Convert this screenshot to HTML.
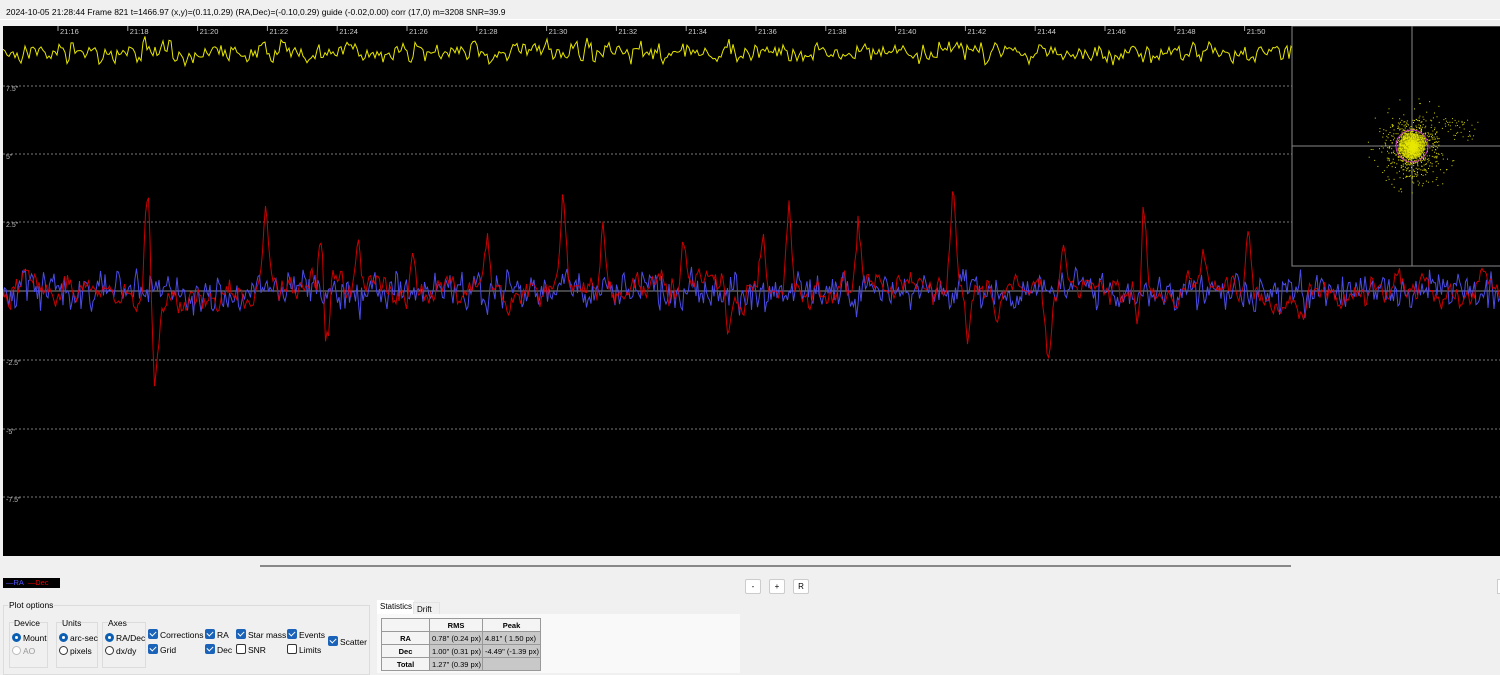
<!DOCTYPE html>
<html><head><meta charset="utf-8"><style>
*{box-sizing:border-box}
body{margin:0;width:1500px;height:673px;background:#f0f0f0;font-family:"Liberation Sans",sans-serif;font-size:8.5px;color:#000;position:relative;overflow:hidden}
.abs{position:absolute}
#top{left:0;top:0;width:1500px;height:20px;background:#f0f0f0;border-bottom:1px solid #fff}
#top span{position:absolute;left:6px;top:7px;font-size:8.5px}
#plot{left:3px;top:26px;width:1497px;height:530px;background:#000}
.grp{position:absolute;border:1px solid #dcdcdc;}
.lbl{position:absolute;font-size:8.5px;white-space:nowrap}
.rad{display:inline-block;width:9px;height:9px;border-radius:50%;border:1px solid #333;background:#fff;vertical-align:-1px;margin-right:2px}
.rad.on{border:3px solid #0a5fb4}
.cb{display:inline-block;width:10px;height:10px;background:#1a63b8;border-radius:2px;vertical-align:-1px;margin-right:2px;position:relative}
.cb:after{content:"";position:absolute;left:3px;top:1px;width:3px;height:5px;border:solid #fff;border-width:0 1px 1px 0;transform:rotate(45deg)}
.cb.off{background:#fff;border:1px solid #333}.cb.off:after{display:none}
.btn{position:absolute;top:579px;width:16px;height:15px;background:#fff;border:1px solid #ccc;border-radius:2px;font-size:8px;text-align:center;line-height:13px}
table{border-collapse:collapse;font-size:7.5px;white-space:nowrap;table-layout:fixed;width:159px}
td{border:1px solid #999;height:13px;padding:0 2px;line-height:11px;overflow:hidden}
</style></head><body>
<div id="top" class="abs"><span>2024-10-05 21:28:44 Frame 821 t=1466.97 (x,y)=(0.11,0.29) (RA,Dec)=(-0.10,0.29) guide (-0.02,0.00) corr (17,0) m=3208 SNR=39.9</span></div>
<svg id="plot" class="abs" width="1497" height="530" viewBox="0 0 1497 530"></svg>
<div class="abs" style="left:260px;top:565px;width:1031px;height:2px;background:#888"></div>
<div class="abs" style="left:3px;top:578px;width:57px;height:10px;background:#000;font-size:7.5px;line-height:10px;padding-left:3px;white-space:nowrap"><span style="color:#55f">—RA</span> &nbsp;<span style="color:#e00">—Dec</span></div>
<div class="btn" style="left:745px">-</div><div class="btn" style="left:769px">+</div><div class="btn" style="left:793px">R</div>
<div class="abs" style="left:1497px;top:579px;width:6px;height:15px;background:#fff;border:1px solid #ccc"></div>
<div class="grp" style="left:3px;top:605px;width:367px;height:70px"></div>
<div class="lbl" style="left:8px;top:600px;background:#f0f0f0;padding:0 1px">Plot options</div>
<div class="grp" style="left:9px;top:622px;width:39px;height:46px"></div><div class="lbl" style="left:14px;top:618px;background:#f0f0f0">Device</div>
<div class="lbl" style="left:12px;top:633px"><span class="rad on"></span>Mount</div>
<div class="lbl" style="left:12px;top:646px;color:#999"><span class="rad" style="border-color:#bbb"></span>AO</div>
<div class="grp" style="left:56px;top:622px;width:42px;height:46px"></div><div class="lbl" style="left:62px;top:618px;background:#f0f0f0">Units</div>
<div class="lbl" style="left:59px;top:633px"><span class="rad on"></span>arc-sec</div>
<div class="lbl" style="left:59px;top:646px"><span class="rad"></span>pixels</div>
<div class="grp" style="left:102px;top:622px;width:44px;height:46px"></div><div class="lbl" style="left:108px;top:618px;background:#f0f0f0">Axes</div>
<div class="lbl" style="left:105px;top:633px"><span class="rad on"></span>RA/Dec</div>
<div class="lbl" style="left:105px;top:646px"><span class="rad"></span>dx/dy</div>
<div class="lbl" style="left:148px;top:629px"><span class="cb"></span>Corrections</div>
<div class="lbl" style="left:148px;top:644px"><span class="cb"></span>Grid</div>
<div class="lbl" style="left:205px;top:629px"><span class="cb"></span>RA</div>
<div class="lbl" style="left:205px;top:644px"><span class="cb"></span>Dec</div>
<div class="lbl" style="left:236px;top:629px"><span class="cb"></span>Star mass</div>
<div class="lbl" style="left:236px;top:644px"><span class="cb off"></span>SNR</div>
<div class="lbl" style="left:287px;top:629px"><span class="cb"></span>Events</div>
<div class="lbl" style="left:287px;top:644px"><span class="cb off"></span>Limits</div>
<div class="lbl" style="left:328px;top:636px"><span class="cb"></span>Scatter</div>
<div class="abs" style="left:377px;top:600px;width:37px;height:15px;background:#fff;font-size:8px;padding:2px 3px">Statistics</div>
<div class="abs" style="left:413px;top:602px;width:27px;height:13px;background:#f0f0f0;border:1px solid #e4e4e4;font-size:8px;padding:2px 3px">Drift</div>
<div class="abs" style="left:377px;top:614px;width:363px;height:59px;background:#f9f9f9"></div>
<table class="abs" style="left:381px;top:618px">
<colgroup><col style="width:48px"><col style="width:53px"><col style="width:58px"></colgroup>
<tr><td style="background:#f4f4f4"></td><td style="background:#f4f4f4;text-align:center;font-weight:bold">RMS</td><td style="background:#f4f4f4;text-align:center;font-weight:bold">Peak</td></tr>
<tr><td style="background:#f4f4f4;text-align:center;font-weight:bold">RA</td><td style="background:#c8c8c8">0.78" (0.24 px)</td><td style="background:#c8c8c8">4.81" ( 1.50 px)</td></tr>
<tr><td style="background:#f4f4f4;text-align:center;font-weight:bold">Dec</td><td style="background:#c8c8c8">1.00" (0.31 px)</td><td style="background:#c8c8c8">-4.49" (-1.39 px)</td></tr>
<tr><td style="background:#f4f4f4;text-align:center;font-weight:bold">Total</td><td style="background:#c8c8c8">1.27" (0.39 px)</td><td style="background:#c8c8c8"></td></tr>
</table>
<script>
var s=document.getElementById('plot'),h='';
var seed=7;function r(){seed=(seed*16807)%2147483647;return seed/2147483647;}
function g(){return (r()+r()+r()-1.5)*1.4;}
var ys=[60,128,196,265,334,403,471],lab=['7.5"','5"','2.5"','','-2.5"','-5"','-7.5"'];
ys.forEach(function(y,i){ if(i==3) h+='<line x1="0" y1="265" x2="1497" y2="265" stroke="#8a8a8a" stroke-width="1"/>';
 else h+='<line x1="0" y1="'+y+'" x2="1497" y2="'+y+'" stroke="#777" stroke-dasharray="2,2"/>';
 if(lab[i]) h+='<text x="3" y="'+(y+5)+'" fill="#bbb" font-size="7" font-family="Liberation Sans">'+lab[i]+'</text>';});
for(var k=0;k<18;k++){var x=55+k*69.8;h+='<line x1="'+x+'" y1="0" x2="'+x+'" y2="5" stroke="#aaa"/><text x="'+(x+2)+'" y="8" fill="#ccc" font-size="7.5" font-family="Liberation Sans">21:'+(16+2*k)+'</text>';}
var p='',yv=0;for(var x=0;x<=1290;x+=2){yv=yv*0.3+g()*7;p+=(x?'L':'M')+x+','+(26+yv).toFixed(1);}
h+='<path d="'+p+'" fill="none" stroke="#e6e600" stroke-width="1"/>';
var pb='',b=0;for(var x=0;x<=1497;x+=1.5){b=b*0.3+g()*13;pb+=(x?'L':'M')+x.toFixed(1)+','+(265+b).toFixed(1);}
h+='<path d="'+pb+'" fill="none" stroke="#4b4be6" stroke-width="1"/>';
var spikes={145:-110,152:85,263:-80,320:-110,322:115,355:-65,485:-55,560:-90,600:-70,725:55,760:-75,786:-100,855:-65,950:-100,965:65,1045:80,1140:-95,1136:55,1200:-55,1245:-60,1060:-50,680:-50,410:-45};
var pr='',v=0;for(var x=0;x<=1497;x+=1.5){v=v*0.8+g()*9;var y=265+v;for(var sx in spikes){var d=Math.abs(x-sx);if(d<6)y+=spikes[sx]*(1-d/6);}
pr+=(x?'L':'M')+x.toFixed(1)+','+y.toFixed(1);}
h+='<path d="'+pr+'" fill="none" stroke="#e00000" stroke-width="1" opacity="0.9"/>';
h+='<rect x="1289" y="0" width="210" height="240" fill="#000" stroke="#888"/>';
h+='<line x1="1409" y1="0" x2="1409" y2="240" stroke="#888"/><line x1="1289" y1="120" x2="1497" y2="120" stroke="#888"/>';
for(var i=0;i<1400;i++){var a=r()*6.283,rr=Math.pow(r(),1.3)*(i<300?45:i<800?28:16);h+='<rect x="'+(1409+Math.cos(a)*rr).toFixed(1)+'" y="'+(120+Math.sin(a)*rr*1.15).toFixed(1)+'" width="1" height="1" fill="#dd0"/>';}
for(var i=0;i<40;i++){h+='<rect x="'+(1440+r()*35).toFixed(1)+'" y="'+(92+r()*22).toFixed(1)+'" width="1" height="1" fill="#cc0"/>';}
h+='<circle cx="1409" cy="120" r="13" fill="#ee0" opacity="0.6"/><circle cx="1409" cy="120" r="16" fill="none" stroke="#c03cc0"/>';
s.innerHTML=h;
</script>
</body></html>
